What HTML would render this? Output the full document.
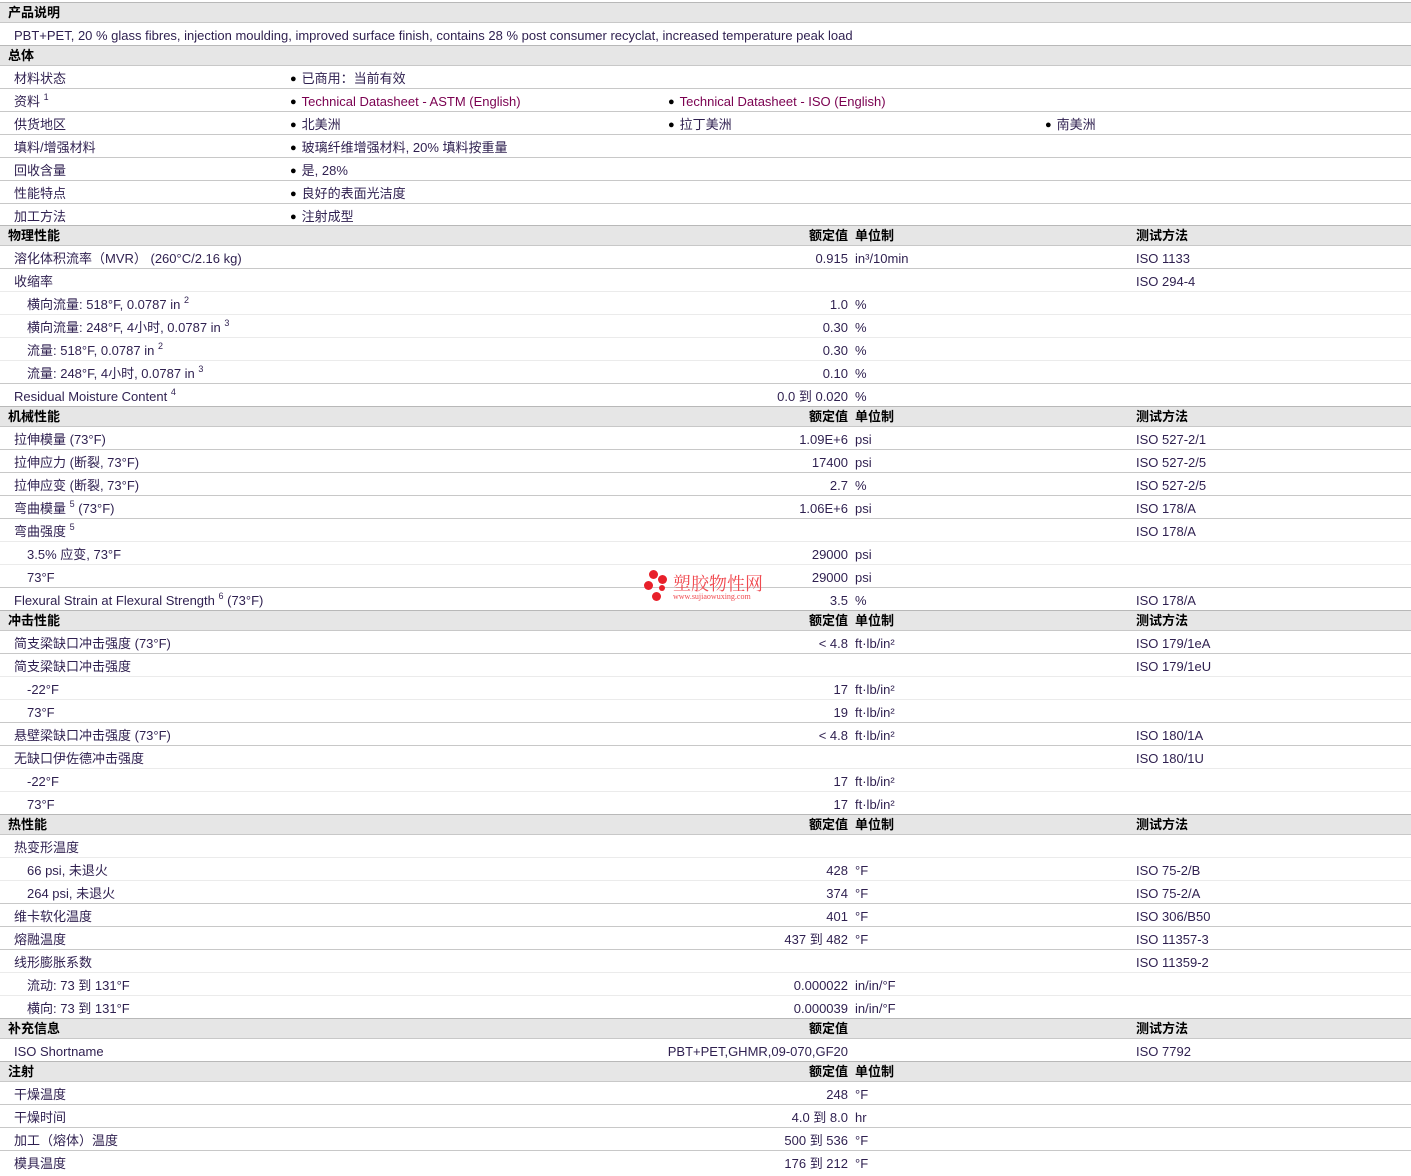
<!DOCTYPE html>
<html><head><meta charset="utf-8">
<style>
*{box-sizing:border-box;margin:0;padding:0}
body{width:1411px;height:1173px;overflow:hidden;background:#fff;padding-top:2px;font-family:"Liberation Sans","Noto Sans CJK SC",sans-serif;font-size:13px;color:#2e1f4f;position:relative}
.h{height:20px;background:#e6e6e6;border-top:1px solid #b8b8b8;position:relative;font-weight:bold;color:#000;font-size:13px}
.r{height:23px;border-top:1px solid #c8c8c8;position:relative}
.s{border-top-color:#ebebeb}
.h span,.r span{position:absolute;top:0;line-height:25px;white-space:nowrap}
.h span{line-height:20px}
.h .l{left:8px}
.l{left:14px}.li{left:27px}
.v{right:563px;text-align:right}
.u{left:855px}
.t{left:1136px}
.b1{left:290px}.b2{left:668px}.b3{left:1045px}
.b1:before,.b2:before,.b3:before{content:"●";color:#000;font-size:11px;margin-right:5px;position:relative;top:-1px}
a{color:#7a0050;text-decoration:none}
sup{font-size:9px;vertical-align:baseline;position:relative;top:-6px}
.wm{position:absolute;left:643px;top:568px}
.dot{position:absolute;width:9px;height:9px;border-radius:50%;background:#e8202a}
.wt{position:absolute;left:30px;top:2px;color:#f04a50;font-size:18px;white-space:nowrap;font-family:"Noto Serif CJK SC",serif}
.ws{position:absolute;left:30px;top:24px;color:#f04a50;font-size:8px;white-space:nowrap;font-family:"Liberation Serif",serif}
</style></head><body>
<div class="h"><span class="l">产品说明</span></div>
<div class="r"><span class="l">PBT+PET, 20 % glass fibres, injection moulding, improved surface finish, contains 28 % post consumer recyclat, increased temperature peak load</span></div>
<div class="h"><span class="l">总体</span></div>
<div class="r"><span class="l">材料状态</span><span class="b1">已商用：当前有效</span></div>
<div class="r"><span class="l">资料 <sup>1</sup></span><span class="b1"><a>Technical Datasheet - ASTM (English)</a></span><span class="b2"><a>Technical Datasheet - ISO (English)</a></span></div>
<div class="r"><span class="l">供货地区</span><span class="b1">北美洲</span><span class="b2">拉丁美洲</span><span class="b3">南美洲</span></div>
<div class="r"><span class="l">填料/增强材料</span><span class="b1">玻璃纤维增强材料, 20% 填料按重量</span></div>
<div class="r"><span class="l">回收含量</span><span class="b1">是, 28%</span></div>
<div class="r"><span class="l">性能特点</span><span class="b1">良好的表面光洁度</span></div>
<div class="r" style="height:22px"><span class="l">加工方法</span><span class="b1">注射成型</span></div>
<div class="h"><span class="l">物理性能</span><span class="v">额定值</span><span class="u">单位制</span><span class="t">测试方法</span></div>
<div class="r"><span class="l">溶化体积流率（MVR） (260°C/2.16 kg)</span><span class="v">0.915</span><span class="u">in³/10min</span><span class="t">ISO 1133</span></div>
<div class="r"><span class="l">收缩率</span><span class="t">ISO 294-4</span></div>
<div class="r s"><span class="li">横向流量: 518°F, 0.0787 in <sup>2</sup></span><span class="v">1.0</span><span class="u">%</span></div>
<div class="r s"><span class="li">横向流量: 248°F, 4小时, 0.0787 in <sup>3</sup></span><span class="v">0.30</span><span class="u">%</span></div>
<div class="r s"><span class="li">流量: 518°F, 0.0787 in <sup>2</sup></span><span class="v">0.30</span><span class="u">%</span></div>
<div class="r s"><span class="li">流量: 248°F, 4小时, 0.0787 in <sup>3</sup></span><span class="v">0.10</span><span class="u">%</span></div>
<div class="r"><span class="l">Residual Moisture Content <sup>4</sup></span><span class="v">0.0 到 0.020</span><span class="u">%</span></div>
<div class="h"><span class="l">机械性能</span><span class="v">额定值</span><span class="u">单位制</span><span class="t">测试方法</span></div>
<div class="r"><span class="l">拉伸模量 (73°F)</span><span class="v">1.09E+6</span><span class="u">psi</span><span class="t">ISO 527-2/1</span></div>
<div class="r"><span class="l">拉伸应力 (断裂, 73°F)</span><span class="v">17400</span><span class="u">psi</span><span class="t">ISO 527-2/5</span></div>
<div class="r"><span class="l">拉伸应变 (断裂, 73°F)</span><span class="v">2.7</span><span class="u">%</span><span class="t">ISO 527-2/5</span></div>
<div class="r"><span class="l">弯曲模量 <sup>5</sup> (73°F)</span><span class="v">1.06E+6</span><span class="u">psi</span><span class="t">ISO 178/A</span></div>
<div class="r"><span class="l">弯曲强度 <sup>5</sup></span><span class="t">ISO 178/A</span></div>
<div class="r s"><span class="li">3.5% 应变, 73°F</span><span class="v">29000</span><span class="u">psi</span></div>
<div class="r s"><span class="li">73°F</span><span class="v">29000</span><span class="u">psi</span></div>
<div class="r"><span class="l">Flexural Strain at Flexural Strength <sup>6</sup> (73°F)</span><span class="v">3.5</span><span class="u">%</span><span class="t">ISO 178/A</span></div>
<div class="h"><span class="l">冲击性能</span><span class="v">额定值</span><span class="u">单位制</span><span class="t">测试方法</span></div>
<div class="r"><span class="l">简支梁缺口冲击强度 (73°F)</span><span class="v">&lt; 4.8</span><span class="u">ft·lb/in²</span><span class="t">ISO 179/1eA</span></div>
<div class="r"><span class="l">简支梁缺口冲击强度</span><span class="t">ISO 179/1eU</span></div>
<div class="r s"><span class="li">-22°F</span><span class="v">17</span><span class="u">ft·lb/in²</span></div>
<div class="r s"><span class="li">73°F</span><span class="v">19</span><span class="u">ft·lb/in²</span></div>
<div class="r"><span class="l">悬壁梁缺口冲击强度 (73°F)</span><span class="v">&lt; 4.8</span><span class="u">ft·lb/in²</span><span class="t">ISO 180/1A</span></div>
<div class="r"><span class="l">无缺口伊佐德冲击强度</span><span class="t">ISO 180/1U</span></div>
<div class="r s"><span class="li">-22°F</span><span class="v">17</span><span class="u">ft·lb/in²</span></div>
<div class="r s"><span class="li">73°F</span><span class="v">17</span><span class="u">ft·lb/in²</span></div>
<div class="h"><span class="l">热性能</span><span class="v">额定值</span><span class="u">单位制</span><span class="t">测试方法</span></div>
<div class="r"><span class="l">热变形温度</span></div>
<div class="r s"><span class="li">66 psi, 未退火</span><span class="v">428</span><span class="u">°F</span><span class="t">ISO 75-2/B</span></div>
<div class="r s"><span class="li">264 psi, 未退火</span><span class="v">374</span><span class="u">°F</span><span class="t">ISO 75-2/A</span></div>
<div class="r"><span class="l">维卡软化温度</span><span class="v">401</span><span class="u">°F</span><span class="t">ISO 306/B50</span></div>
<div class="r"><span class="l">熔融温度</span><span class="v">437 到 482</span><span class="u">°F</span><span class="t">ISO 11357-3</span></div>
<div class="r"><span class="l">线形膨胀系数</span><span class="t">ISO 11359-2</span></div>
<div class="r s"><span class="li">流动: 73 到 131°F</span><span class="v">0.000022</span><span class="u">in/in/°F</span></div>
<div class="r s"><span class="li">横向: 73 到 131°F</span><span class="v">0.000039</span><span class="u">in/in/°F</span></div>
<div class="h"><span class="l">补充信息</span><span class="v">额定值</span><span class="t">测试方法</span></div>
<div class="r"><span class="l">ISO Shortname</span><span class="v">PBT+PET,GHMR,09-070,GF20</span><span class="t">ISO 7792</span></div>
<div class="h"><span class="l">注射</span><span class="v">额定值</span><span class="u">单位制</span></div>
<div class="r"><span class="l">干燥温度</span><span class="v">248</span><span class="u">°F</span></div>
<div class="r"><span class="l">干燥时间</span><span class="v">4.0 到 8.0</span><span class="u">hr</span></div>
<div class="r"><span class="l">加工（熔体）温度</span><span class="v">500 到 536</span><span class="u">°F</span></div>
<div class="r"><span class="l">模具温度</span><span class="v">176 到 212</span><span class="u">°F</span></div>
<div class="wm">
<div class="dot" style="left:6px;top:2px"></div>
<div class="dot" style="left:15px;top:7px"></div>
<div class="dot" style="left:1px;top:13px"></div>
<div class="dot" style="left:9px;top:24px"></div>
<div class="dot" style="left:16px;top:17px;width:6px;height:6px"></div>
<div class="wt">塑胶物性网</div>
<div class="ws">www.sujiaowuxing.com</div>
</div>
</body></html>
